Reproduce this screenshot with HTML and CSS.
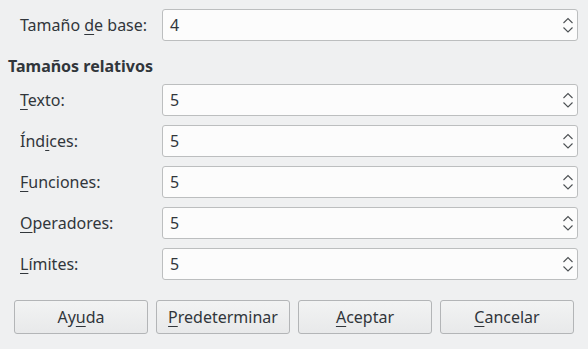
FILE: index.html
```html
<!DOCTYPE html>
<html lang="es">
<head>
  <meta charset="UTF-8" />
  <title>Tamaños de fuente</title>
  <link rel="stylesheet" href="styles.css">
</head>
<body>

<div class="dialog">
  <div class="row base-row">
    <label class="lbl">Tamaño <u>d</u>e base:</label>
    <div class="spin"><span class="val">4</span><span class="arrows"></span></div>
  </div>

  <div class="group-title">Tamaños relativos</div>

  <div class="row">
    <label class="lbl"><u>T</u>exto:</label>
    <div class="spin"><span class="val">5</span><span class="arrows"></span></div>
  </div>
  <div class="row">
    <label class="lbl">Índ<u>i</u>ces:</label>
    <div class="spin"><span class="val">5</span><span class="arrows"></span></div>
  </div>
  <div class="row">
    <label class="lbl"><u>F</u>unciones:</label>
    <div class="spin"><span class="val">5</span><span class="arrows"></span></div>
  </div>
  <div class="row">
    <label class="lbl"><u>O</u>peradores:</label>
    <div class="spin"><span class="val">5</span><span class="arrows"></span></div>
  </div>
  <div class="row">
    <label class="lbl"><u>L</u>ímites:</label>
    <div class="spin"><span class="val">5</span><span class="arrows"></span></div>
  </div>

  <div class="buttons">
    <button class="btn">Ay<u>u</u>da</button>
    <button class="btn"><u>P</u>redeterminar</button>
    <button class="btn"><u>A</u>ceptar</button>
    <button class="btn"><u>C</u>ancelar</button>
  </div>
</div>

<script>
  // same chevron pair in every spin box
  const chevrons = '<svg width="12" height="20" viewBox="0 0 12 20">'
    + '<path d="M1.5 8 L6 3.5 L10.5 8" fill="none" stroke="#4d5154" stroke-width="1.1"/>'
    + '<path d="M1.5 12.5 L6 17 L10.5 12.5" fill="none" stroke="#4d5154" stroke-width="1.1"/>'
    + '</svg>';
  document.querySelectorAll('.arrows').forEach(el => el.innerHTML = chevrons);
</script>

</body>
</html>
```

FILE: styles.css
```css
* { box-sizing: border-box; margin: 0; padding: 0; }

body {
  font-family: 'Noto Sans', 'Open Sans', sans-serif;
  font-size: 16px;
  color: #31363b;
  background: #eff0f1;
  width: 588px;
  height: 349px;
  overflow: hidden;
}

.dialog {
  padding: 9px 10px 0 8px;
}

u {
  text-decoration: underline;
  text-underline-offset: 3px;
  text-decoration-thickness: 1px;
}

.row {
  display: grid;
  grid-template-columns: 154px 416px;
  align-items: center;
  margin-bottom: 9px;
}

.base-row { margin-bottom: 15px; }

.lbl {
  padding-left: 12px;
  line-height: 20px;
}

.group-title {
  font-weight: bold;
  line-height: 20px;
  margin-bottom: 8px;
}

.spin {
  height: 32px;
  background: #fcfcfc;
  border: 1px solid #bcbebf;
  border-radius: 3px;
  display: flex;
  align-items: center;
  justify-content: space-between;
  padding: 0 3px 0 7px;
}

.val { line-height: 20px; }

.arrows {
  display: flex;
  align-items: center;
  height: 20px;
}

/* margins collapse with the last row, so this is the full gap */
.buttons {
  display: flex;
  gap: 8px;
  margin-top: 20px;
  padding-left: 6px;
}

.btn {
  width: 134px;
  height: 34px;
  font-family: 'Noto Sans', 'Open Sans', sans-serif;
  font-size: 16px;
  color: #31363b;
  background: linear-gradient(#f2f3f3, #e8e9ea);
  border: 1px solid #b3b5b7;
  border-radius: 3px;
}
```
